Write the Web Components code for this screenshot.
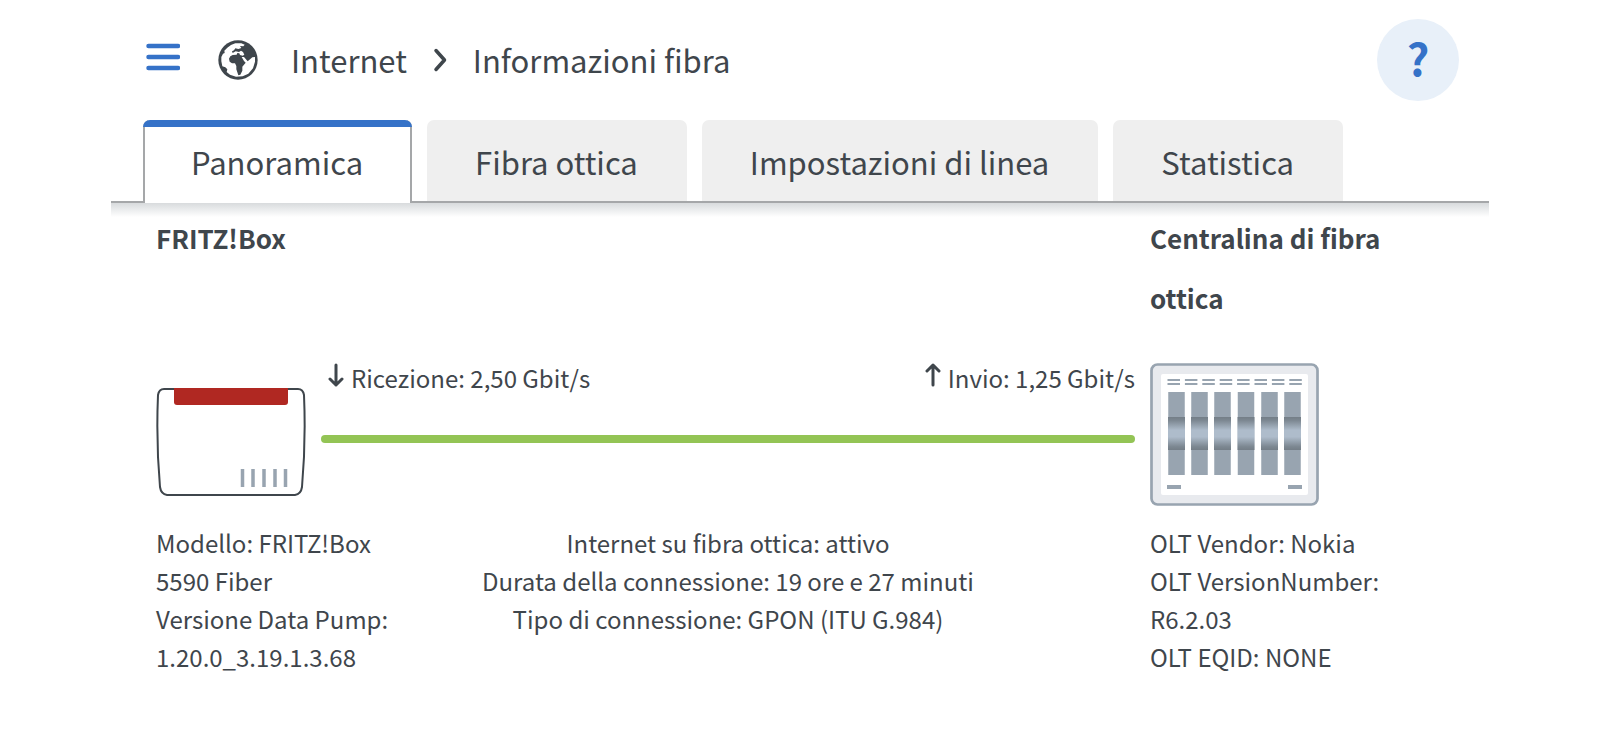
<!DOCTYPE html>
<html lang="it">
<head>
<meta charset="utf-8">
<meta name="viewport" content="width=device-width, initial-scale=1">
<title>Informazioni fibra</title>
<style>
  body {
    margin: 0;
    background: #fff;
    color: #3f464c;
    font-family: "Noto Sans CJK SC", "Noto Sans", sans-serif;
    font-size: 24px;
    line-height: 38px;
  }
</style>
</head>
<body>
<fiber-page></fiber-page>

<script>
const define = (name, html) => {
  const template = document.createElement('template');
  template.innerHTML = html;
  customElements.define(name, class extends HTMLElement {
    constructor() {
      super();
      this.attachShadow({ mode: 'open' }).append(template.content.cloneNode(true));
    }
  });
};

define('menu-button', `
  <style>
    :host { display: block; }
    button { display: block; padding: 0; border: 0; background: none; cursor: pointer; }
    svg { display: block; }
  </style>
  <button type="button" aria-label="Menu">
    <svg width="34" height="28" viewBox="0 0 34 28" stroke="#3572c8" stroke-width="4.500" stroke-linecap="round"><path d="M2.500 3h29.500M2.500 14h29.500M2.500 25h29.500"/></svg>
  </button>`);

define('globe-icon', `
  <style>:host { display: block; } svg { display: block; }</style>
  <svg width="40" height="40" viewBox="56 57 120 120" aria-hidden="true">
    <circle cx="116" cy="117" r="59" fill="#3f464c"/>
    <path fill="#fff" d="M66 121 L66 108 L71 98 L76 96 L75 89 L84 80 L95 72 L108 67 L126 67 L136 71 L132 76 L122 75 L126 81 L117 84 L108 82 L104 88 L98 91 L100 96 L109 91 L119 93 L125 89 L131 93 L135 101 L130 104 L122 102 L120 97 L114 96 L112 101 L100 102 L93 106 L89 113 L91 122 L98 127 L107 127 L111 135 L111 145 L117 163 L123 161 L129 149 L129 137 L139 125 L134 120 L127 108 L134 108 L145 121 L153 114 L159 109 L167 108 L167 122 L161 142 L147 158 L130 166 L110 167 L92 161 L82 153 L84 145 L78 139 L69 136 Z"/>
  </svg>`);

define('page-header', `
  <style>
    :host { display: flex; align-items: center; height: 120px; padding: 0 30px 0 35px; font-size: 31px; line-height: 44px; }
    menu-button { margin-right: 38px; padding-bottom: 6px; }
    globe-icon { margin-right: 33px; }
    nav { display: flex; align-items: center; gap: 26px; }
    a { color: inherit; text-decoration: none; }
    svg { display: block; }
    help-button { margin-left: auto; }
  </style>
  <menu-button></menu-button>
  <globe-icon></globe-icon>
  <nav aria-label="Percorso">
    <a href="#internet">Internet</a>
    <svg width="14" height="24" viewBox="0 0 14 24" fill="none" stroke="#3f464c" stroke-width="3.500" stroke-linecap="round" stroke-linejoin="round"><path d="M3 2.500l8.500 9.500L3 21.500"/></svg>
    <span>Informazioni fibra</span>
  </nav>
  <help-button></help-button>`);

define('help-button', `
  <style>
    :host { display: block; }
    button { display: block; width: 82px; height: 82px; padding: 0 0 6px; border: 0; border-radius: 50%; background: #e8f0f9; color: #3572c8; font: bold 44px/76px "Noto Sans CJK SC", "Noto Sans", sans-serif; cursor: pointer; }
  </style>
  <button type="button" aria-label="Aiuto">?</button>`);

define('tab-bar', `
  <style>
    :host { display: flex; gap: 15px; padding: 0 32px; border-bottom: 2px solid #a5a7a9; position: relative; }
    :host::after { content: ""; position: absolute; left: 0; right: 0; top: calc(100% + 2px); height: 14px; background: linear-gradient(#d8dbdd, #fff); }
  </style>
  <slot></slot>`);

define('tab-item', `
  <style>
    :host { display: block; font-size: 31px; line-height: 44px; }
    a { display: block; box-sizing: border-box; height: 81px; padding: 20px 49px 0 48px; border-radius: 7px 7px 0 0; background: #efefef; color: inherit; text-decoration: none; }
    :host([selected]) { margin-bottom: -2px; position: relative; }
    :host([selected]) a { height: 83px; padding: 20px 47px 0 46px; background: #fff; border: solid #a5a7a9; border-width: 0 2px; position: relative; }
    :host([selected]) a::before { content: ""; position: absolute; left: -2px; right: -2px; top: 0; height: 7px; border-radius: 7px 7px 0 0; background: #3572c8; }
  </style>
  <a href="#"><slot></slot></a>`);

define('router-icon', `
  <style>:host { display: block; } svg { display: block; }</style>
  <svg width="150" height="110" viewBox="0 0 150 110" aria-hidden="true">
    <path d="M8 2H142Q147 2 148 8Q150 55 146 100Q145 107 139 108H11Q5 107 4 100Q0 55 2 8Q3 2 8 2Z" fill="#fff" stroke="#3f464c" stroke-width="2"/>
    <path d="M18 1H132V15Q132 18 129 18H21Q18 18 18 15Z" fill="#b02822"/>
    <path d="M86.500 82v18M97 82v18M108 82v18M119 82v18M129.500 82v18" stroke="#98a4b0" stroke-width="3.500"/>
  </svg>`);

define('olt-icon', `
  <style>:host { display: block; } svg { display: block; }</style>
  <svg width="169" height="143" viewBox="0 0 169 143" aria-hidden="true">
    <defs>
      <linearGradient id="band" x1="0" y1="0" x2="0" y2="1">
        <stop offset="0" stop-color="#747e87"/><stop offset=".1" stop-color="#7c8791"/><stop offset=".4" stop-color="#aebccb"/><stop offset=".6" stop-color="#aebccb"/><stop offset=".9" stop-color="#7c8791"/><stop offset="1" stop-color="#747e87"/>
      </linearGradient>
    </defs>
    <rect x="1.500" y="1.500" width="166" height="140" rx="6" fill="#e8eaee" stroke="#98a4b0" stroke-width="2.700"/>
    <rect x="11" y="11" width="147" height="121" rx="2" fill="#fff"/>
    <path d="M17.500 17H152M17.500 21H152" stroke="#98a4b0" stroke-width="2" stroke-dasharray="12.500 4.900"/>
    <path d="M26.500 29v83M49.500 29v83M72.500 29v83M96 29v83M119.500 29v83M142.500 29v83" stroke="#98a4b0" stroke-width="16.500"/>
    <g fill="url(#band)">
      <rect x="18" y="54" width="17" height="33"/><rect x="41" y="54" width="17" height="33"/><rect x="64" y="54" width="17" height="33"/><rect x="87.500" y="54" width="17" height="33"/><rect x="111" y="54" width="17" height="33"/><rect x="134" y="54" width="17" height="33"/>
    </g>
    <path d="M17 124h14M138 124h14" stroke="#98a4b0" stroke-width="4"/>
  </svg>`);

define('speed-label', `
  <style>
    :host { display: flex; align-items: flex-start; gap: 7px; line-height: 30px; }
    svg { display: block; }
    :host([up]) svg { transform: rotate(180deg); }
  </style>
  <svg width="16" height="24" viewBox="0 0 16 24" fill="none" stroke="#3f464c" stroke-width="3" stroke-linecap="round" stroke-linejoin="round" aria-hidden="true"><path d="M8 2v20M2 16l6 6 6-6"/></svg>
  <span><slot></slot></span>`);

define('link-line', `
  <style>
    :host { display: block; }
    .speeds { display: flex; justify-content: space-between; padding-left: 7px; }
    .line { height: 8px; margin-top: 42px; border-radius: 4px; background: #93c455; }
  </style>
  <div class="speeds"><slot></slot></div>
  <div class="line"></div>`);

define('connection-overview', `
  <style>
    :host { display: grid; grid-template-columns: 150px 1fr 294px; column-gap: 15px; padding: 5px 45px; }
    h2 { margin: 0; font-size: 26px; line-height: 60px; font-weight: 700; }
    .left { grid-column: 1 / 3; }
    .right { grid-column: 3; }
    .text { grid-row: 3; margin-top: 18px; }
    p { margin: 0; }
    .text.left { max-width: 240px; }
    .text.middle { grid-column: 2; text-align: center; }
    router-icon, link-line, olt-icon { grid-row: 2; margin-top: 35px; }
    router-icon { padding-top: 24px; }
  </style>
  <h2 class="left">FRITZ!Box</h2>
  <h2 class="right">Centralina di fibra ottica</h2>
  <router-icon></router-icon>
  <link-line>
    <speed-label>Ricezione: 2,50 Gbit/s</speed-label>
    <speed-label up>Invio: 1,25 Gbit/s</speed-label>
  </link-line>
  <olt-icon></olt-icon>
  <div class="text left"><p>Modello: FRITZ!Box 5590 Fiber</p><p>Versione Data Pump: 1.20.0_3.19.1.3.68</p></div>
  <div class="text middle"><p>Internet su fibra ottica: attivo</p><p>Durata della connessione: 19 ore e 27 minuti</p><p>Tipo di connessione: GPON (ITU G.984)</p></div>
  <div class="text right"><p>OLT Vendor: Nokia</p><p>OLT VersionNumber: R6.2.03</p><p>OLT EQID: NONE</p></div>`);

define('fiber-page', `
  <style>
    :host { display: block; margin: 0 111px; }
  </style>
  <page-header></page-header>
  <tab-bar>
    <tab-item selected>Panoramica</tab-item>
    <tab-item>Fibra ottica</tab-item>
    <tab-item>Impostazioni di linea</tab-item>
    <tab-item>Statistica</tab-item>
  </tab-bar>
  <connection-overview></connection-overview>`);
</script>
</body>
</html>
